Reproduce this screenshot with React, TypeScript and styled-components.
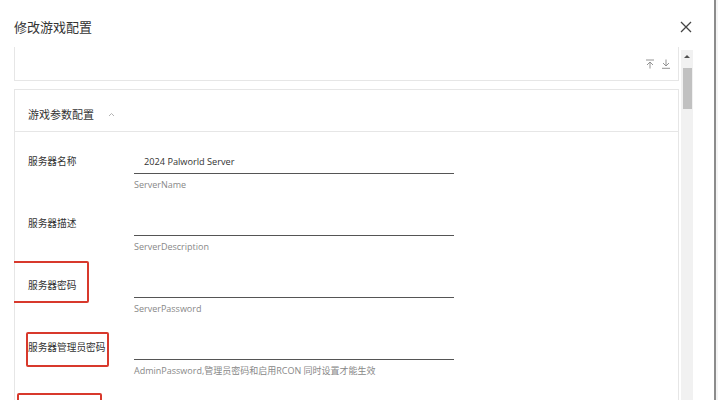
import React from "react";
import styled, {createGlobalStyle} from "styled-components";

const GlobalStyle = createGlobalStyle`
  html, body {
    margin: 0;
    padding: 0;
    background: #fff;
    overflow: hidden;
  }
  body {
    font-family: "Open Sans", "Noto Sans CJK SC", sans-serif;
    color: #333;
  }
`;

const Page = styled.div`
  display: flex;
  width: 718px;
  height: 400px;
  overflow: hidden;
`;

const Dialog = styled.div`
  width: 714px;
  height: 400px;
  display: flex;
  flex-direction: column;
  background: #fff;
`;

const Edge = styled.div`
  width: 2px;
  background: #8c8c8c;
`;

const Outside = styled.div`
  flex: 1;
  background: #f4f4f4;
`;

const Header = styled.div`
  height: 47px;
  box-sizing: border-box;
  padding: 18px 22px 0 14px;
  display: flex;
  align-items: flex-start;
  justify-content: space-between;
`;

const Title = styled.div`
  font-family: "Noto Sans CJK SC", sans-serif;
  font-size: 13px;
  line-height: 18px;
  color: #333;
`;

const Close = styled.button`
  border: none;
  background: none;
  padding: 0;
  margin-top: 3px;
  width: 12px;
  height: 12px;
  display: flex;
`;

const Body = styled.div`
  flex: 1;
  display: flex;
  padding-left: 14px;
  min-height: 0;
`;

const ScrollArea = styled.div`
  width: 665px;
  overflow: hidden;
  display: flex;
  flex-direction: column;
`;

const Card = styled.div<{ $cut?: boolean }>`
  border: 1px solid #e6e6e6;
  border-top: ${p => p.$cut ? 'none' : '1px solid #e6e6e6'};
  background: #fff;
  flex-shrink: 0;
`;

const ToolRow = styled.div`
  height: 33px;
  display: flex;
  align-items: center;
  justify-content: flex-end;
  gap: 6px;
  padding-right: 7px;
`;

const Spacer = styled.div`
  height: 8px;
  flex-shrink: 0;
`;

const SectionHead = styled.div`
  height: 34px;
  padding-top: 7px;
  display: flex;
  align-items: center;
  gap: 14px;
  padding-left: 13px;
  border-bottom: 1px solid #e6e6e6;
  font-family: "Noto Sans CJK SC", sans-serif;
  font-size: 11px;
  color: #333;
`;

const Form = styled.div`
  display: flex;
  flex-direction: column;
  gap: 18px;
  padding: 17px 0 0 13px;
`;

const Row = styled.div`
  display: grid;
  grid-template-columns: 106px 320px;
`;

const LabelCell = styled.div`
  position: relative;
  height: 24px;
  display: flex;
  align-items: center;
  font-family: "Noto Sans CJK SC", sans-serif;
  font-size: 9.7px;
  color: #333;
  white-space: nowrap;
`;

const Annotation = styled.div<{ $l: number; $t: number; $w: number; $h: number }>`
  position: absolute;
  left: ${p => p.$l}px;
  top: ${p => p.$t}px;
  width: ${p => p.$w}px;
  height: ${p => p.$h}px;
  box-sizing: border-box;
  border: 2px solid #d8392c;
  border-radius: 2px;
`;

const Field = styled.div`
  display: flex;
  flex-direction: column;
`;

const Input = styled.div`
  height: 24px;
  border-bottom: 1px solid #555;
  display: flex;
  align-items: center;
  padding-left: 10px;
  font-family: "Open Sans", "Noto Sans CJK SC", sans-serif;
  font-size: 9.2px;
  color: #333;
`;

const Hint = styled.div`
  margin-top: 3px;
  line-height: 16px;
  font-family: "Open Sans", "Noto Sans CJK SC", sans-serif;
  font-size: 9px;
  color: #888;
  white-space: nowrap;
`;

const Scrollbar = styled.div`
  width: 12px;
  margin: 3px 0 0 2px;
  background: #f1f1f1;
  display: flex;
  flex-direction: column;
  align-items: center;
`;

const ScrollArrow = styled.div`
  margin-top: 5px;
  width: 0;
  height: 0;
  border-left: 3px solid transparent;
  border-right: 3px solid transparent;
  border-bottom: 3px solid #505050;
`;

const Thumb = styled.div`
  margin-top: 10px;
  width: 9px;
  height: 41px;
  background: #c1c1c1;
`;

const CloseIcon = () => (
    <svg width="12" height="12" viewBox="0 0 12 12">
        <path d="M1 1L11 11M11 1L1 11" stroke="#444" strokeWidth="1.3" fill="none"/>
    </svg>
);

const ToTopIcon = () => (
    <svg width="10" height="10" viewBox="0 0 10 10" fill="none" stroke="#888" strokeWidth="0.9">
        <path d="M1 1H9M5 3V9.5M2 6L5 3L8 6"/>
    </svg>
);

const ToBottomIcon = () => (
    <svg width="10" height="10" viewBox="0 0 10 10" fill="none" stroke="#888" strokeWidth="0.9">
        <path d="M1 9.3H9M5 0.5V7M2 4L5 7L8 4"/>
    </svg>
);

const ChevronUp = () => (
    <svg width="7" height="5" viewBox="0 0 7 5" fill="none" stroke="#aaa" strokeWidth="0.9">
        <path d="M1 4L3.5 1.5L6 4"/>
    </svg>
);

interface IMark {
    l: number,
    t: number,
    w: number,
    h: number
}

interface IFieldRow {
    label: string,
    value?: string,
    hint: string,
    mark?: IMark
}

// the last row sits below the fold: only its marker shows
const rows: IFieldRow[] = [
    {label: '服务器名称', value: '2024 Palworld Server', hint: 'ServerName'},
    {label: '服务器描述', hint: 'ServerDescription'},
    {label: '服务器密码', hint: 'ServerPassword', mark: {l: -17, t: -12, w: 78, h: 42}},
    {label: '服务器管理员密码', hint: 'AdminPassword,管理员密码和启用RCON 同时设置才能生效', mark: {l: -2, t: -3, w: 83, h: 35}},
    {label: '', hint: '', mark: {l: -11, t: -4, w: 85, h: 40}},
];

const FieldRow: React.FC<IFieldRow> = ({label, value, hint, mark}) => (
    <Row>
        <LabelCell>
            {label}
            {mark && <Annotation $l={mark.l} $t={mark.t} $w={mark.w} $h={mark.h}/>}
        </LabelCell>
        <Field>
            <Input>{value}</Input>
            <Hint>{hint}</Hint>
        </Field>
    </Row>
);

const App: React.FC = () => (
    <Page>
        <GlobalStyle/>
        <Dialog>
            <Header>
                <Title>修改游戏配置</Title>
                <Close><CloseIcon/></Close>
            </Header>
            <Body>
                <ScrollArea>
                    <Card $cut>
                        <ToolRow>
                            <ToTopIcon/>
                            <ToBottomIcon/>
                        </ToolRow>
                    </Card>
                    <Spacer/>
                    <Card>
                        <SectionHead>
                            游戏参数配置
                            <ChevronUp/>
                        </SectionHead>
                        <Form>
                            {rows.map((r, i) => <FieldRow key={i} {...r}/>)}
                        </Form>
                    </Card>
                </ScrollArea>
                <Scrollbar>
                    <ScrollArrow/>
                    <Thumb/>
                </Scrollbar>
            </Body>
        </Dialog>
        <Edge/>
        <Outside/>
    </Page>
);

export default App;
